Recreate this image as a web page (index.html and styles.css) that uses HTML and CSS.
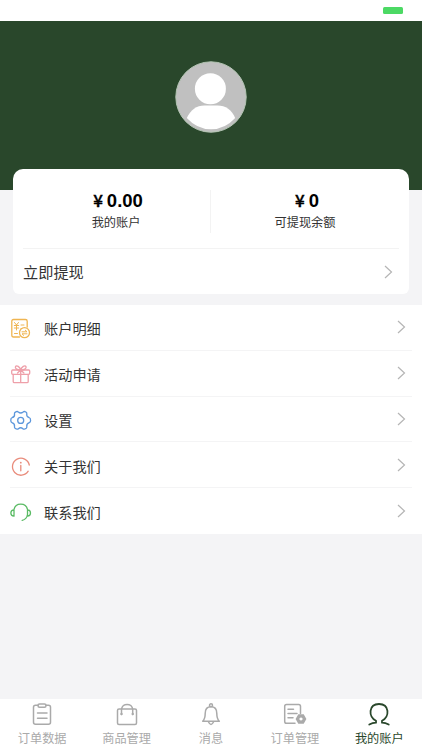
FILE: index.html
```html
<!DOCTYPE html>
<html lang="zh-CN">
<head>
<meta charset="utf-8">
<title>我的账户</title>
<link rel="stylesheet" href="styles.css">
</head>
<body>
<div class="app">
  <div class="status"><span class="battery"></span></div>
  <header class="hero">
    <svg class="avatar" width="72" height="72" viewBox="0 0 72 72">
      <circle cx="36" cy="36" r="35.2" fill="#c0c0c0" stroke="#b4c5b4" stroke-width="1"/>
      <circle cx="35.4" cy="27.8" r="15.5" fill="#fff"/>
      <path d="M11.8 57C15.5 49 21.500 44.500 29.500 44.500H42.500C50.500 44.500 57 49 60.200 57Q50 68.300 36 68.300T11.800 57Z" fill="#fff"/>
    </svg>
  </header>
  <section class="card">
    <div class="balances">
      <div class="balance"><div class="amount"><span class="yen">¥</span>0.00</div><div class="label">我的账户</div></div>
      <div class="balance"><div class="amount"><span class="yen">¥</span>0</div><div class="label">可提现余额</div></div>
    </div>
    <div class="withdraw"><span>立即提现</span><svg class="chevron" width="9" height="14" viewBox="0 0 9 14"><path d="M1 1l6.500 6L1 13"/></svg></div>
  </section>
  <nav class="menu">
    <div class="row">
      <svg class="icon gold" width="22" height="22" viewBox="0 0 22 22"><path d="M9.500 19H3.500Q1.800 19 1.800 17.300V3.200Q1.800 1.500 3.500 1.500H15.500Q17.200 1.500 17.200 3.200V9"/><path class="thin" d="M4.500 4.500l2 2.500L8.500 4.500M6.500 7v5M4.300 7.500h4.400M4.300 10h4.400M11 7h3M11 10.500h1M4.500 15.500h3"/><circle cx="14.500" cy="14.700" r="5"/><path class="thin" d="M12 13.800h5l-1.700-1.600M17 15.800h-5l1.700 1.600"/></svg>
      <span class="name">账户明细</span><svg class="chevron" width="9" height="14" viewBox="0 0 9 14"><path d="M1 1l6.500 6L1 13"/></svg>
    </div>
    <div class="row">
      <svg class="icon pink" width="22" height="22" viewBox="0 0 22 22"><rect x="1.700" y="6" width="18" height="4.300" rx="1"/><path d="M3.200 10.300V17.500Q3.200 18.700 4.400 18.700H17Q18.200 18.700 18.200 17.500V10.300M10.700 6v12.700M10.700 6C7.500 6.300 4.600 4.500 5.500 2.600C6.500.5 10 3 10.700 6C11.400 3 15 .5 16 2.600C16.800 4.500 14 6.300 10.700 6M10.700 6L7.500 9M10.700 6l3.200 3"/></svg>
      <span class="name">活动申请</span><svg class="chevron" width="9" height="14" viewBox="0 0 9 14"><path d="M1 1l6.500 6L1 13"/></svg>
    </div>
    <div class="row">
      <svg class="icon blue" width="22" height="22" viewBox="0 0 22 22"><path d="M6.300 1.700Q7.500 1.200 8.300 2Q10.700 4 13.100 2Q14 1.200 15.200 1.700L16.200 2.300Q17 3 16.800 4Q16.300 6.800 19 7.500Q20 7.800 20.300 8.800L20.600 10.500Q20.600 12.200 19.300 12.700Q16.300 13.800 16.800 16.600Q17 17.700 16.200 18.300L14.800 19Q13.600 19.500 12.900 18.700Q10.700 16.800 8.400 18.700Q7.600 19.500 6.500 19L5.100 18.300Q4.300 17.700 4.500 16.600Q5 13.800 2 12.700Q.8 12.200.8 10.500L1 8.800Q1.300 7.800 2.300 7.500Q5 6.800 4.500 4Q4.300 3 5.100 2.300Z"/><circle cx="10.700" cy="10.400" r="3"/></svg>
      <span class="name">设置</span><svg class="chevron" width="9" height="14" viewBox="0 0 9 14"><path d="M1 1l6.500 6L1 13"/></svg>
    </div>
    <div class="row">
      <svg class="icon coral" width="22" height="22" viewBox="0 0 22 22"><path d="M18.200 15.200A8.500 8.500 0 1 1 19.300 9M10.800 9.300v5.500"/><circle class="dot" cx="10.800" cy="6.700" r=".9"/></svg>
      <span class="name">关于我们</span><svg class="chevron" width="9" height="14" viewBox="0 0 9 14"><path d="M1 1l6.500 6L1 13"/></svg>
    </div>
    <div class="row">
      <svg class="icon green" width="22" height="22" viewBox="0 0 22 22"><path d="M4 7.500C5.500 .2 16 .2 17.500 7.500V12.500C17 15.500 15 17.800 12.200 18.300M4 7.800C-.2 8-.2 14 4 14.200ZM17.500 7.800C21.500 8 21.500 14 17.500 14.200Z"/></svg>
      <span class="name">联系我们</span><svg class="chevron" width="9" height="14" viewBox="0 0 9 14"><path d="M1 1l6.500 6L1 13"/></svg>
    </div>
  </nav>
  <footer class="tabs">
    <div class="tab"><svg width="26" height="26" viewBox="0 0 26 26"><path d="M9 3.300H6.500Q4.500 3.300 4.500 5.300V20.200Q4.500 22.200 6.500 22.200H19.500Q21.500 22.200 21.500 20.200V5.300Q21.500 3.300 19.500 3.300H17M8.500 11h9.500M8.500 16.300h9.500"/><rect x="9" y="2" width="8" height="3.300" rx="1.500"/></svg><span>订单数据</span></div>
    <div class="tab"><svg width="26" height="26" viewBox="0 0 26 26"><rect x="3.500" y="7" width="19" height="15.500" rx="1.500"/><path d="M7.500 12.500V7.500C8 .7 18.200.7 18.700 7.500V12.500"/><circle class="fill" cx="7.500" cy="12" r="1.200"/><circle class="fill" cx="18.700" cy="12" r="1.200"/></svg><span>商品管理</span></div>
    <div class="tab"><svg width="26" height="26" viewBox="0 0 26 26"><path d="M4.700 19.200C6.500 17.500 7.200 16 7.200 11.500C7.200 7 9.300 4.800 13 4.800S18.800 7 18.800 11.500C18.800 16 19.500 17.500 21.300 19.200ZM10.500 20Q13 25 15.500 20"/><circle cx="13" cy="3.300" r="1.500"/></svg><span>消息</span></div>
    <div class="tab"><svg width="26" height="26" viewBox="0 0 26 26"><path d="M13 21.200H4.500Q2.700 21.200 2.700 19.400V4.400Q2.700 2.600 4.500 2.600H16.700Q18.500 2.600 18.500 4.400V11.500M6 7.200h5.500M6 11.500h9M6 15.800h5"/><path class="fill" fill-rule="evenodd" d="M16.300 12.300H21.700L24.400 17L21.700 21.700H16.300L13.600 17ZM19 15.400a1.600 1.600 0 1 0 .01 0Z"/></svg><span>订单管理</span></div>
    <div class="tab active"><svg width="26" height="26" viewBox="0 0 26 26"><path d="M3.300 22.500Q6.500 20.800 10 20.700V18.700C2 15 2.500 2 13 2S24 15 16 18.700V20.700Q19.500 20.800 22.700 22.500"/></svg><span>我的账户</span></div>
  </footer>
</div>
</body>
</html>
```
FILE: styles.css
```css
* { box-sizing: border-box; }
body { margin: 0; font-family: "Liberation Sans", "Noto Sans CJK SC", sans-serif; color: #333; }
.app { width: 422px; height: 750px; display: flex; flex-direction: column; background: #f4f4f6; overflow: hidden; }
.status { flex: 0 0 20.500px; background: #fff; display: flex; justify-content: flex-end; padding: 7px 19px 0 0; }
.battery { width: 20px; height: 7px; border-radius: 1.500px; background: #4cd964; }
.hero { flex: 0 0 169px; background: #29472b; display: flex; justify-content: center; align-items: flex-start; padding-top: 40.500px; }
.avatar { display: block; }
svg { fill: none; }
.card { flex: 0 0 125px; margin: -20.500px 13px 0; background: #fff; border-radius: 10px 10px 6px 6px; padding: 0 10px; }
.balances { height: 79.500px; border-bottom: 1px solid #f3f3f3; display: grid; grid-template-columns: 188px 188px; }
.balance { text-align: center; padding-top: 19px; position: relative; }
.balance:first-child { padding-right: 2px; }
.balance:first-child::after { content: ""; position: absolute; right: 0; top: 21px; height: 43px; border-right: 1px solid #f3f3f3; }
.amount { font-size: 18.500px; font-weight: 700; line-height: 24px; color: #000; padding-left: 4px; }
.yen { font: 500 17px/24px "Noto Sans CJK SC", sans-serif; margin-right: 4px; -webkit-text-stroke: .4px #000; }
.label { font-size: 12.200px; line-height: 18px; margin-top: 1px; }
.withdraw { height: 45px; display: flex; justify-content: space-between; align-items: center; font-size: 15.200px; padding: 1px 6px 0 0; line-height: 20px; }
.withdraw span { padding-top: 2px; }
.chevron { stroke: #b5b5b5; stroke-width: 1.200; }
.menu { margin-top: 11px; flex: 0 0 229px; background: #fff; padding: 0 10px; }
.row { height: 45.800px; display: flex; align-items: center; border-bottom: 1px solid #f4f4f5; padding: 4px 6px 0 0; }
.row:last-child { border-bottom: 0; }
.name { flex: 1; margin-left: 12px; font-size: 14.200px; line-height: 20px; }
.row .chevron { margin: -4px 0 0; }
.icon { stroke-width: 1.300; stroke-linecap: round; stroke-linejoin: round; }
.thin { stroke-width: 1; }
.gold { stroke: #efb552; }
.pink { stroke: #ee9fa9; }
.blue { stroke: #5c97dc; }
.coral { stroke: #e98c7c; }
.green { stroke: #5bbb65; }
.dot { fill: #e98c7c; stroke: none; }
.tabs { margin-top: auto; height: 51.500px; background: #fff; display: grid; grid-template-columns: repeat(5, 1fr); color: #aaa; }
.tab { display: flex; flex-direction: column; align-items: center; padding-top: 3.500px; font-size: 12.200px; line-height: 18px; }
.tab svg { display: block; stroke: #aaa; stroke-width: 1.500; stroke-linecap: round; stroke-linejoin: round; }
.tab:nth-child(n+4) { padding-right: 1px; }
.tab span { margin-top: 1.500px; }
.tab .fill { fill: #aaa; stroke: none; }
.active { color: #29472b; }
.active svg { stroke: #29472b; stroke-width: 1.800; }
```
